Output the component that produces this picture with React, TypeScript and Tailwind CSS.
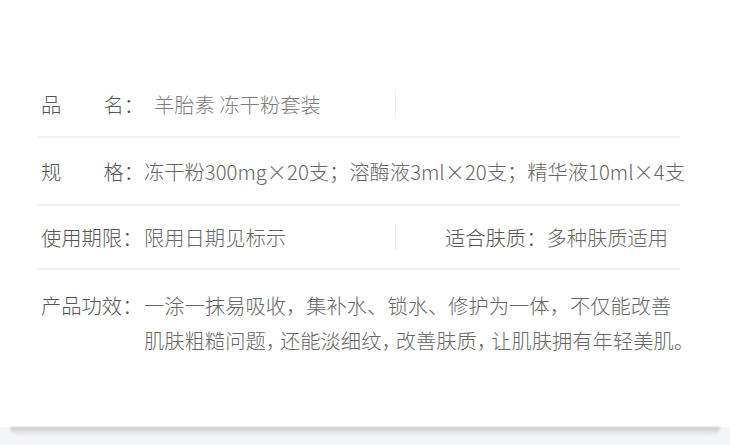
const FONT = "font-['Noto_Sans_CJK_SC','Noto_Sans',sans-serif]";

function Label({ children }: { children: React.ReactNode }) {
  return <div className="w-[103px] shrink-0 flex justify-between text-[#555]">{children}</div>;
}

function Divider() {
  return <div className="w-px h-[26px] bg-[#ececec] shrink-0" />;
}

function Comma() {
  return <span className="tracking-[-6px]">，</span>;
}

export default function App() {
  return (
    <div className={`w-[730px] h-[445px] bg-white flex flex-col ${FONT} text-[20.3px] font-light`}>
      <div className="flex-1 pt-[72px] pl-[38px] w-[680px]">
        {/* 品名 */}
        <div className="h-[66px] flex items-center border-b-2 border-[#f0f0f0] pl-[3px]">
          <div className="w-[354px] flex items-center">
            <Label>
              <span>品</span>
              <span>名：</span>
            </Label>
            <span className="ml-[10px] text-[#7d7d7d]">羊胎素 冻干粉套装</span>
          </div>
          <Divider />
        </div>

        {/* 规格 */}
        <div className="h-[68px] flex items-center border-b-2 border-[#f0f0f0] pl-[3px] whitespace-nowrap">
          <Label>
            <span>规</span>
            <span>格：</span>
          </Label>
          <span className="text-[#666]">冻干粉300mg×20支；溶酶液3ml×20支；精华液10ml×4支</span>
        </div>

        {/* 使用期限 */}
        <div className="h-[64px] flex items-center border-b-2 border-[#f0f0f0] pl-[3px]">
          <div className="w-[354px] flex items-center">
            <Label>
              <span>使用期限：</span>
            </Label>
            <span className="text-[#666]">限用日期见标示</span>
          </div>
          <Divider />
          <div className="pl-[49px] flex items-center">
            <span className="text-[#555]">适合肤质：</span>
            <span className="text-[#666]">多种肤质适用</span>
          </div>
        </div>

        {/* 产品功效 */}
        <div className="flex pt-[18px] pl-[3px] leading-[35px]">
          <Label>
            <span>产品功效：</span>
          </Label>
          <p className="text-[#666] w-[560px] whitespace-nowrap">
            一涂一抹易吸收，集补水、锁水、修护为一体，不仅能改善
            <br />
            肌肤粗糙问题<Comma />还能淡细纹<Comma />改善肤质<Comma />让肌肤拥有年轻美肌
            <span className="tracking-[-6px]">。</span>
          </p>
        </div>
      </div>

      {/* bottom shadow strip */}
      <div className="h-[18px] bg-[#f4f5f7] relative">
        <div className="absolute left-[10px] right-[10px] top-0 h-[10px] bg-gradient-to-b from-[#c4c4c4] via-[#e6e6e6] to-[#f4f5f7] rounded-b-full blur-[1px]" />
      </div>
    </div>
  );
}
